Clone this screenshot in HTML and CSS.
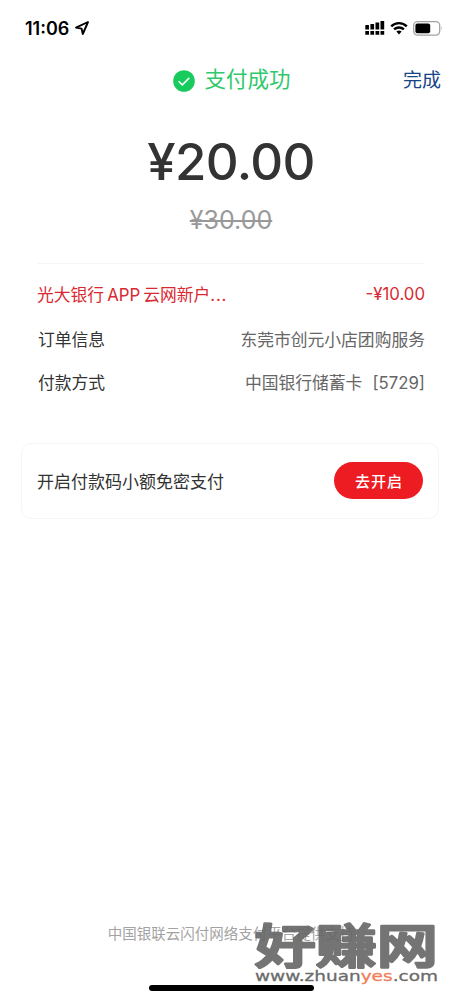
FILE: index.html
```html
<!DOCTYPE html>
<html lang="zh-CN">
<head>
    <meta charset="UTF-8">
    <meta name="viewport" content="width=device-width, initial-scale=1.0">
    <title>支付成功</title>
    <link rel="stylesheet" href="styles.css">
</head>
<body>
    <div class="page">
        <div class="status-bar">
            <span class="time">11:06</span>
            <svg class="location" width="16" height="16" viewBox="0 0 16 16">
                <path d="M14 2 L2 7.6 L7.6 8.6 L8.8 14 Z" fill="none" stroke="#000" stroke-width="1.9" stroke-linejoin="round"/>
            </svg>
            <div class="status-icons">
                <svg width="20" height="16" viewBox="0 0 20 16">
                    <path d="M.3 5.5q0-.5.5-.5h2.7q.5 0 .5.5V9.5H.3zM5.4 4h3.7v5.5H5.4zM10.5 2.5h3.7v7h-3.7zM15.5 1h3.7v8.5h-3.7zM.3 11H4v3.7H.3zM5.4 11h3.7v3.7H5.4zM10.5 11h3.7v3.7h-3.7zM15.5 11h3.7v3.7h-3.7z"/>
                </svg>
                <svg width="18" height="14" viewBox="0 0 18 14">
                    <path d="M1.2 5.3a11.2 11.2 0 0 1 15.6 0M4.1 8.4a7.1 7.1 0 0 1 9.8 0" fill="none" stroke="#000" stroke-width="2.4"/>
                    <path d="M6.4 10.6a3.8 3.8 0 0 1 5.2 0L9 13.4z"/>
                </svg>
                <svg width="30" height="15" viewBox="0 0 30 15">
                    <rect x=".7" y=".7" width="26" height="13.4" rx="3.8" fill="none" stroke="#a3a3a3" stroke-width="1.3"/>
                    <rect x="2.4" y="2.5" width="14.8" height="9.8" rx="2"/>
                    <path d="M28.3 5.2q1.5 2.1 0 4.4z" fill="#a3a3a3"/>
                </svg>
            </div>
        </div>

        <div class="header">
            <svg width="22" height="22" viewBox="0 0 22 22">
                <circle cx="11" cy="11" r="10.8" fill="#17cb5c"/>
                <path d="M5.6 11.3l3.7 3.6 7-7" fill="none" stroke="#fff" stroke-width="1.5"/>
            </svg>
            <h1>支付成功</h1>
            <a class="done">完成</a>
        </div>

        <div class="price">¥20.00</div>
        <div class="old-price">¥30.00</div>

        <div class="details">
            <div class="row discount">
                <span>光大银行<i class="latin">APP</i>云网新户<i class="dots">...</i></span>
                <span class="amount">-¥10.00</span>
            </div>
            <div class="row">
                <span>订单信息</span>
                <span class="value">东莞市创元小店团购服务</span>
            </div>
            <div class="row">
                <span>付款方式</span>
                <span class="value">中国银行储蓄卡<i class="card-no">[5729]</i></span>
            </div>
        </div>

        <div class="card">
            <span>开启付款码小额免密支付</span>
            <button>去开启</button>
        </div>

        <div class="footer">中国银联云闪付网络支付平台提供支持</div>
        <div class="home-bar"></div>

        <!-- 水印 -->
        <div class="watermark">
            <svg class="mark-name" width="190" height="53">
                <text x="0.5" y="46.5" transform="scale(1.3 1)">好赚网</text>
            </svg>
            <svg class="mark-url" width="186" height="20">
                <text x="1" y="12" textLength="183" lengthAdjust="spacingAndGlyphs">www.zhuan<tspan class="mark-yes">yes</tspan>.com</text>
            </svg>
        </div>
    </div>
</body>
</html>
```

FILE: styles.css
```css
* {
    box-sizing: border-box;
}
body {
    margin: 0;
    background: #fff;
    color: #333;
    font-family: Inter, 'Liberation Sans', 'Noto Sans CJK SC', sans-serif;
}
i {
    font-style: normal;
}
svg {
    display: block;
}
.page {
    position: relative;
    width: 462px;
    height: 1000px;
    display: flex;
    flex-direction: column;
    overflow: hidden;
}
.status-bar {
    display: flex;
    align-items: center;
    height: 56px;
    padding: 0 19px 0 25px;
    color: #000;
}
.time {
    font-size: 18px;
    font-weight: 600;
}
.location {
    margin-left: 5px;
}
.status-icons {
    display: flex;
    align-items: center;
    gap: 5px;
    margin-left: auto;
}
.header {
    position: relative;
    display: flex;
    align-items: center;
    justify-content: center;
    gap: 9px;
    height: 50px;
    padding-left: 2px;
    color: #2fc86b;
}
.header h1 {
    margin: 0 0 4px;
    font-size: 21.5px;
    font-weight: 400;
    line-height: 30px;
}
.done {
    position: absolute;
    right: 21px;
    top: 11px;
    font-size: 19px;
    line-height: 28px;
    color: #174387;
}
.price {
    height: 84px;
    margin-top: 14px;
    font-size: 51px;
    font-weight: 500;
    line-height: 84px;
    letter-spacing: -0.6px;
    text-align: center;
}
.old-price {
    height: 30px;
    font-size: 25px;
    line-height: 32px;
    text-align: center;
    color: #999;
    text-decoration: line-through;
    text-decoration-thickness: 1.5px;
}
.details {
    margin: 29px 37px 0 38px;
    padding-top: 8px;
    border-top: 1px solid #f5f5f5;
    font-size: 16.8px;
}
.row {
    display: flex;
    align-items: center;
    justify-content: space-between;
    height: 44px;
}
.row:nth-child(2) {
    padding-top: 2px;
}
.discount {
    margin-left: -1px;
    color: #d92932;
}
.latin {
    margin: 0 3px;
}
.dots {
    letter-spacing: 0.8px;
}
.value {
    color: #666;
}
.card-no {
    margin-left: 10px;
}
.card {
    display: flex;
    align-items: center;
    justify-content: space-between;
    height: 76px;
    margin: 39px 23px 0 21px;
    padding: 0 15px 2px;
    border: 1px solid #f5f5f5;
    border-radius: 10px;
    font-size: 17px;
}
.card button {
    width: 89px;
    height: 37px;
    padding: 0 0 0 1px;
    border: none;
    border-radius: 19px;
    background: #ed1c22;
    color: #fff;
    font-family: 'Noto Sans CJK SC', sans-serif;
    font-size: 15px;
    font-weight: 500;
    letter-spacing: 1px;
}
.footer {
    margin-top: auto;
    font-size: 14.5px;
    line-height: 20px;
    text-align: center;
    color: #a3a3a3;
}
.home-bar {
    width: 165px;
    height: 6px;
    margin: 41px auto 9px;
    border-radius: 3px;
    background: #000;
}
.watermark {
    position: absolute;
    left: 254px;
    top: 916px;
    opacity: 0.9;
}
.mark-name {
    font-family: 'Noto Sans CJK SC', sans-serif;
    font-size: 47px;
    font-weight: 500;
    fill: #666;
    stroke: #666;
    stroke-width: 2.6;
    stroke-linejoin: round;
}
.mark-url {
    font-family: 'DejaVu Sans', sans-serif;
    font-size: 14px;
    fill: #5c5c5c;
    stroke: #5c5c5c;
    stroke-width: 0.3;
}
.mark-yes {
    fill: #f07048;
    stroke: #f07048;
}
```
